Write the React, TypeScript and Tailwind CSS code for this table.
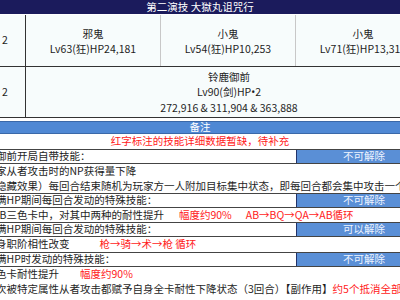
const FONT = "font-['Noto_Sans_CJK_SC','Noto_Sans',sans-serif]";

function MobCell({ name, stat }: { name: string; stat: string }) {
  return (
    <div className="w-[135px] shrink-0 border-r border-[#c8c8c8] flex flex-col items-center justify-center leading-[15px]">
      <span>{name}</span>
      <span>{stat}</span>
    </div>
  );
}

function BoxRow({ text, tag }: { text: React.ReactNode; tag: string }) {
  return (
    <div className="flex h-[15px] border-y border-[#444]">
      <div className="flex-1 flex items-center whitespace-nowrap">{text}</div>
      <div className="w-[136px] shrink-0 bg-[#5a8fd6] border-x border-[#22336a] flex items-center justify-center text-[#eef4ff]">
        {tag}
      </div>
    </div>
  );
}

function Line({ children, h = "h-[15px]" }: { children: React.ReactNode; h?: string }) {
  return <div className={`${h} flex items-center whitespace-nowrap`}>{children}</div>;
}

const Red = ({ children, ml }: { children: React.ReactNode; ml: string }) => (
  <span className={`text-[#ff1a1a] ${ml}`}>{children}</span>
);

export default function App() {
  return (
    <div className={`w-[400px] h-[300px] overflow-hidden bg-white text-[10.5px] leading-none text-[#1e1e1e] ${FONT}`}>
      <div className="h-[14px] bg-[#1b1b5c] text-white flex items-center justify-center">
        第二演技 大獄丸诅咒行
      </div>
      <div className="h-px bg-white" />

      <div className="w-[432px] bg-[#f7fcfc]">
        <div className="flex h-[52px] border-b border-[#333]">
          <div className="w-[26px] shrink-0 border-r border-[#333] flex items-center pl-[2px]">2</div>
          <MobCell name="邪鬼" stat="Lv63(狂)HP24,181" />
          <MobCell name="小鬼" stat="Lv54(狂)HP10,253" />
          <MobCell name="小鬼" stat="Lv71(狂)HP13,312" />
        </div>
        <div className="flex h-[51px] border-b border-[#333]">
          <div className="w-[26px] shrink-0 border-r border-[#333] flex items-center pl-[2px]">2</div>
          <div className="flex-1 flex flex-col items-center justify-center leading-[15px]">
            <span>铃鹿御前</span>
            <span>
              Lv90(剑)HP<span className="font-['Noto_Sans',sans-serif]">•</span>2
            </span>
            <span>272,916 &amp; 311,904 &amp; 363,888</span>
          </div>
        </div>
      </div>

      <div className="h-[3px]" />
      <div className="h-[13px] bg-[#4f88d4] border-y border-[#3a68a8] text-white flex items-center justify-center">
        备注
      </div>
      <div className="h-[15px] flex items-center justify-center text-[#ff1a1a]">
        红字标注的技能详细数据暂缺，待补充
      </div>

      <div className="ml-[-25px] w-[457px]">
        <BoxRow text="铃鹿御前开局自带技能：" tag="不可解除" />
        <Line>令玩家从者攻击时的NP获得量下降</Line>
        <Line h="h-[14px]">※（隐藏效果）每回合结束随机为玩家方一人附加目标集中状态，即每回合都会集中攻击一个</Line>

        <BoxRow text="二、满HP期间每回合发动的特殊技能：" tag="不可解除" />
        <Line h="h-[14px]">
          在QAB三色卡中，对其中两种的耐性提升
          <Red ml="ml-[15px]">幅度约90%</Red>
          <Red ml="ml-[14px]">AB→BQ→QA→AB循环</Red>
        </Line>

        <BoxRow text="三、满HP期间每回合发动的特殊技能：" tag="可以解除" />
        <Line>
          使自身职阶相性改变
          <Red ml="ml-[30px]">枪→骑→术→枪 循环</Red>
        </Line>

        <BoxRow text="四、满HP时发动的特殊技能：" tag="不可解除" />
        <Line>
          使三色卡耐性提升
          <Red ml="ml-[21px]">幅度约90%</Red>
        </Line>
        <Line>
          ※每次被特定属性从者攻击都赋予自身全卡耐性下降状态（3回合）【副作用】
          <Red ml="ml-0">约5个抵消全部</Red>
        </Line>
      </div>
    </div>
  );
}
